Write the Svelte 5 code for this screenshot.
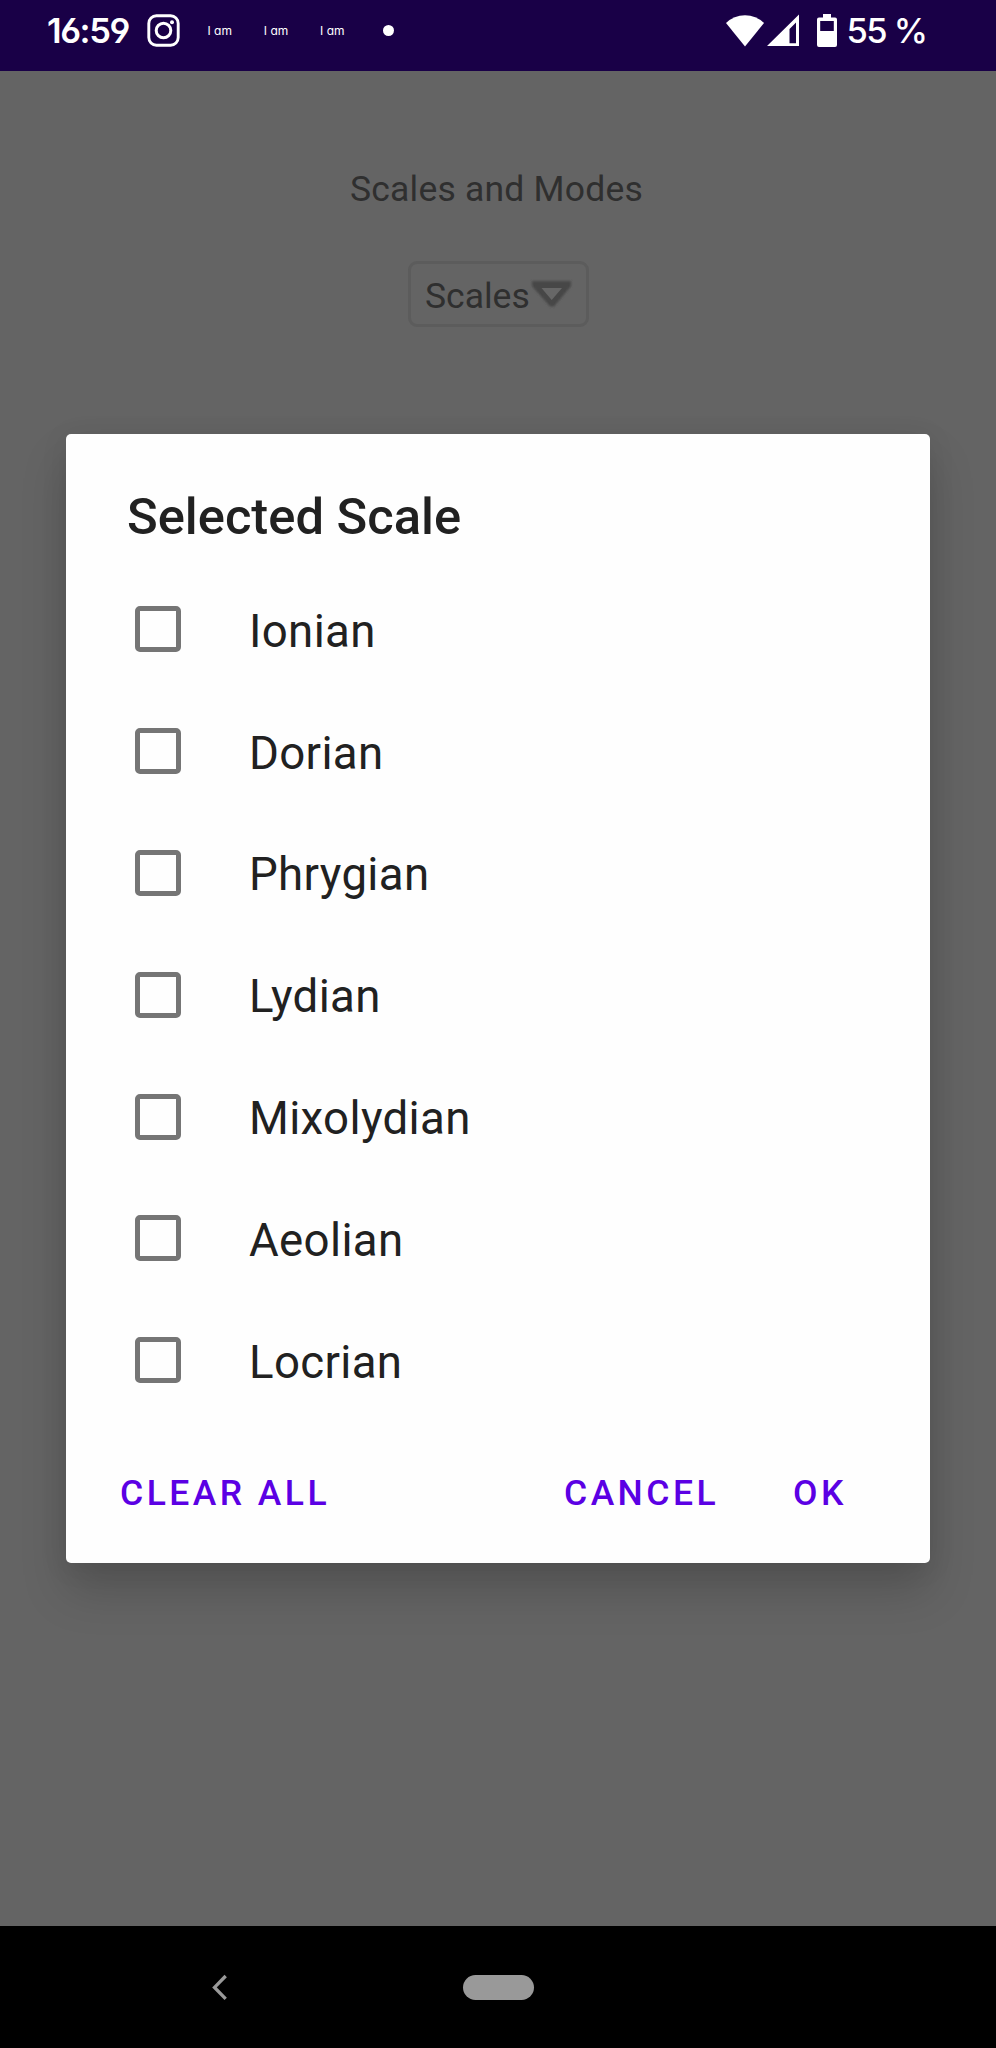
<script>
  const scales = ['Ionian', 'Dorian', 'Phrygian', 'Lydian', 'Mixolydian', 'Aeolian', 'Locrian'];
  let checked = $state(scales.map(() => false));
  const notes = ['I am', 'I am', 'I am'];
</script>

<div class="screen">
  <header class="status">
    <span class="clock">16:59</span>
    <svg class="insta" width="33" height="33" viewBox="0 0 33 33" fill="none" stroke="#fff">
      <rect x="1.8" y="1.8" width="29.4" height="29.4" rx="7.6" stroke-width="2.9" />
      <circle cx="16.5" cy="16.5" r="7.3" stroke-width="3" />
      <circle cx="25" cy="8.2" r="2" fill="#fff" stroke="none" />
    </svg>
    <div class="notes">
      {#each notes as n}<span>{n}</span>{/each}
    </div>
    <i class="dot"></i>
    <div class="system">
      <svg width="38" height="32" viewBox="0 0 38 32"><path fill="#fff" d="M0 8Q8 .2 19 .2T38 8L19 31.5Z" /></svg>
      <svg class="cell" width="33" height="33" viewBox="0 0 33 33"><path fill="#fff" fill-rule="evenodd" d="M32 .5V32H0ZM29 8.5L22.500 15V29.300H29Z" /></svg>
      <svg class="battery" width="20" height="33" viewBox="0 0 20 33"><path fill="#fff" fill-rule="evenodd" d="M6 0h8v3.500h4q2 0 2 2V31q0 2-2 2H2q-2 0-2-2V5.500q0-2 2-2h4ZM3.200 7V17H16.800V7Z" /></svg>
      <span class="percent">55 %</span>
    </div>
  </header>

  <main class="page">
    <h1>Scales and Modes</h1>
    <div class="select">
      <span>Scales</span>
      <svg width="44" height="32" viewBox="0 0 44 32">
        <defs><filter id="soft" x="-20%" y="-20%" width="140%" height="140%"><feGaussianBlur stdDeviation="1.2" /></filter></defs>
        <path d="M2 3H41V8L24 28.500H20L2 8Z" fill="#464646" filter="url(#soft)" />
        <path d="M11.500 10H32L21.700 22Z" fill="#676767" />
      </svg>
    </div>

    <section class="dialog">
      <h2>Selected Scale</h2>
      <ul>
        {#each scales as name, i}
          <li>
            <button class="row" onclick={() => (checked[i] = !checked[i])}>
              <span class="box" class:on={checked[i]}></span>
              <span class="label">{name}</span>
            </button>
          </li>
        {/each}
      </ul>
      <footer>
        <button class="clear">CLEAR ALL</button>
        <button class="cancel">CANCEL</button>
        <button class="ok">OK</button>
      </footer>
    </section>
  </main>

  <nav>
    <svg width="16" height="27" viewBox="0 0 16 27"><path d="M13.700 2L2.500 13.400L13.700 24.800" fill="none" stroke="#999" stroke-width="3.300" /></svg>
    <i class="pill"></i>
  </nav>
</div>

<style>
  :global(body) { background: #646464; }
  .screen { width: 996px; height: 2048px; display: flex; flex-direction: column; overflow: hidden; font-family: Roboto, sans-serif; background: #646464; }
  button { border: 0; background: none; padding: 0; font: inherit; letter-spacing: inherit; color: inherit; text-align: left; }
  h1, h2, ul { margin: 0; padding: 0; list-style: none; font-weight: 400; }

  .status { box-sizing: border-box; height: 71px; flex: none; padding: 0 72.500px 10px 47px; display: flex; align-items: center; background: #190047; color: #fff; font-family: Inter, sans-serif; font-feature-settings: 'cv03', 'cv04', 'cv11'; }
  .clock { width: 100px; font-size: 34.500px; font-weight: 600; letter-spacing: -1.400px; white-space: nowrap; }
  .insta { flex: none; }
  .notes { display: flex; margin-left: 27.500px; }
  .notes span { width: 56.300px; font-size: 12px; font-weight: 400; white-space: nowrap; }
  .dot { width: 11px; height: 11px; border-radius: 50%; background: #fff; margin-left: 6.500px; }
  .system { margin-left: auto; display: flex; align-items: center; }
  .cell { margin-left: 3px; }
  .battery { margin-left: 17px; }
  .percent { width: 77px; margin-left: 10px; font-size: 34.500px; font-weight: 550; letter-spacing: -1.500px; white-space: nowrap; }

  .page { flex: none; height: 1855px; display: flex; flex-direction: column; align-items: center; color: #2f2f2f; font-size: 35.500px; }
  h1 { margin-top: 97px; margin-right: 3px; font-size: 35.500px; line-height: 42px; letter-spacing: 0.200px; }
  .select { box-sizing: border-box; width: 181px; height: 66px; margin-top: 51px; padding-left: 14.500px; display: flex; align-items: center; border: 3px solid #5c5c5c; border-radius: 9px; }
  .select span { letter-spacing: 0; padding-top: 3px; }

  .dialog { box-sizing: border-box; width: 864px; height: 1129px; margin-top: 106.500px; border-radius: 5px; background: #fefefe; color: #212121; box-shadow: 0 28px 46px rgba(0, 0, 0, 0.17), 0 4px 28px rgba(0, 0, 0, 0.08); display: flex; flex-direction: column; }
  h2 { margin: 53px 0 0 61px; font-size: 50.700px; line-height: 60px; font-weight: 500; letter-spacing: 0; }
  ul { margin-top: 22px; }
  .row { display: flex; align-items: center; width: 100%; height: 121.800px; padding-left: 69px; }
  .box { box-sizing: border-box; width: 46px; height: 46px; border: 5px solid #757575; border-radius: 5px; }
  .box.on { background: #6200ee; border-color: #6200ee; }
  .label { margin-left: 68px; padding-top: 4px; font-size: 45.600px; letter-spacing: 0.350px; }
  footer { box-sizing: border-box; flex: none; display: flex; align-items: center; height: 141px; padding: 3px 0 0 54px; color: #5b00e4; font-size: 35.500px; font-weight: 500; letter-spacing: 3.450px; white-space: nowrap; }
  .clear { width: 444px; }
  .cancel { width: 229px; }

  nav { flex: 1; display: flex; align-items: center; padding-left: 212px; background: #000; }
  .pill { width: 71px; height: 25px; border-radius: 13px; background: #999; margin-left: 235px; }
</style>
